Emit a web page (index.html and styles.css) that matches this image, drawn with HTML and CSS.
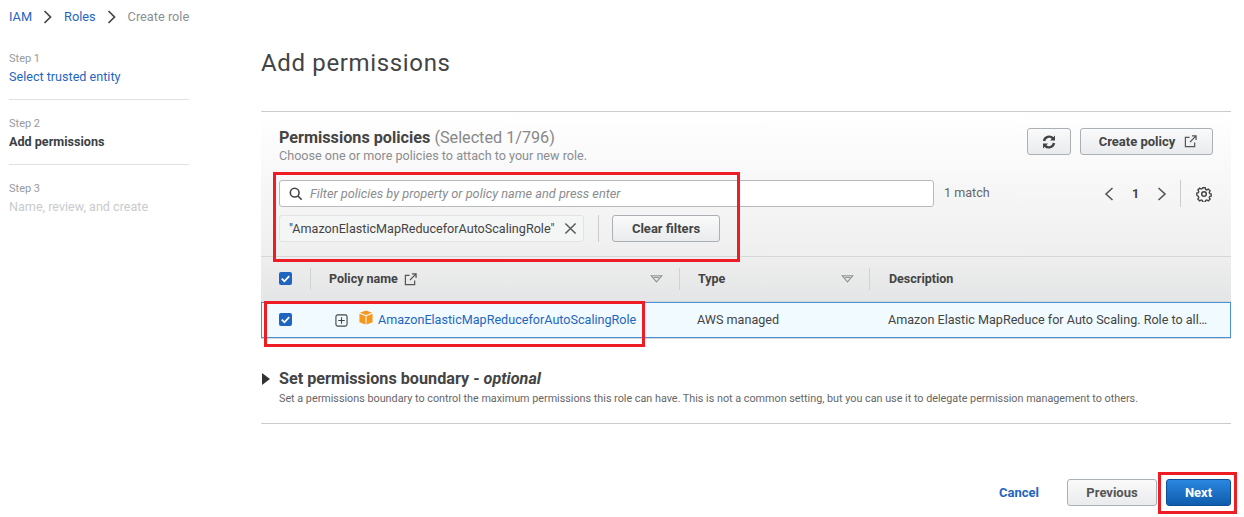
FILE: index.html
```html
<!DOCTYPE html>
<html lang="en">
<head>
<meta charset="utf-8">
<title>Create role</title>
<link rel="stylesheet" href="styles.css">
</head>
<body>
<nav class="crumbs">
  <a class="link">IAM</a>
  <svg class="crumb-sep" viewBox="0 0 12 14"><path d="M2.500 1 8.500 7l-6 6" /></svg>
  <a class="link">Roles</a>
  <svg class="crumb-sep" viewBox="0 0 12 14"><path d="M2.500 1 8.500 7l-6 6" /></svg>
  <span class="crumb-now">Create role</span>
</nav>
<div class="layout">
  <aside class="steps">
    <div class="step step-first"><div class="step-no">Step 1</div><a class="link step-name">Select trusted entity</a></div>
    <div class="step"><div class="step-no">Step 2</div><strong class="step-name step-cur">Add permissions</strong></div>
    <div class="step step-last"><div class="step-no">Step 3</div><span class="step-name step-off">Name, review, and create</span></div>
  </aside>
  <main class="main">
    <h1 class="title">Add permissions</h1>
    <section class="panel">
      <div class="panel-head">
        <div class="head-top">
          <div class="head-text">
            <h2 class="panel-title">Permissions policies <span class="count">(Selected 1/796)</span></h2>
            <p class="panel-sub">Choose one or more policies to attach to your new role.</p>
          </div>
          <div class="head-actions">
            <button class="btn btn-icon"><svg class="ico" viewBox="0 0 16 16"><path class="fat" d="M3 7a5.200 5.200 0 0 1 9-2.600M13 9a5.200 5.200 0 0 1-9 2.600"/><path class="solid" d="M14 1.500V6.500H9zM2 14.500V9.500H7z"/></svg></button>
            <button class="btn btn-create">Create policy<svg class="ext" viewBox="0 0 14 14"><path d="M11.500 8v4.500h-10v-10H6M8.500 1h4.500v4.500M13 1 6.500 7.500"/></svg></button>
          </div>
        </div>
        <div class="filter-row">
          <div class="search">
            <svg class="search-ico" viewBox="0 0 16 16"><circle cx="6.500" cy="6.500" r="5"/><path d="m10.200 10.200 4.300 4.300"/></svg>
            <span class="search-ph">Filter policies by property or policy name and press enter</span>
          </div>
          <span class="matches">1 match</span>
          <div class="pager">
            <svg class="pg" viewBox="0 0 12 16"><path d="M9.500 2 3 8l6.500 6"/></svg>
            <span class="pg-no">1</span>
            <svg class="pg" viewBox="0 0 12 16"><path d="M2.500 2 9 8l-6.500 6"/></svg>
            <span class="pg-div"></span>
            <svg class="gear" viewBox="0 0 16 16"><path d="M6.600 1h2.800l.4 1.900 1.300.6 1.700-1 2 2-1 1.700.6 1.300 1.600.4v2.400l-1.700.5-.5 1.200 1 1.700-2 1.900-1.700-1-1.300.6-.4 1.800H6.600l-.4-1.800-1.300-.6-1.700 1-2-1.900 1-1.700-.5-1.200L0 9.300V6.900l1.700-.4.5-1.300-1-1.700 2-2 1.700 1 1.300-.6z" transform="translate(.8 .8) scale(.9)"/><circle cx="8" cy="8" r="2.300"/></svg>
          </div>
        </div>
        <div class="chips">
          <span class="chip">"AmazonElasticMapReduceforAutoScalingRole"<svg class="chip-x" viewBox="0 0 14 14"><path d="m1.500 1.500 11 11m0-11-11 11"/></svg></span>
          <span class="chip-div"></span>
          <button class="btn btn-clear">Clear filters</button>
        </div>
      </div>
      <div class="thead">
        <div class="th th-check"><span class="check"><svg viewBox="0 0 14 14"><path d="m3 7.200 2.800 2.800L11 4.500"/></svg></span></div>
        <div class="th th-name"><span>Policy name</span><svg class="ext ext-th" viewBox="0 0 14 14"><path d="M11.500 8v4.500h-10v-10H6M8.500 1h4.500v4.500M13 1 6.500 7.500"/></svg><svg class="sort sort-name" viewBox="0 0 16 10"><path d="M1.500 1h13L8 8.500z"/><path d="M4.500 3h7"/></svg></div>
        <div class="th th-type"><span>Type</span><svg class="sort sort-type" viewBox="0 0 16 10"><path d="M1.500 1h13L8 8.500z"/><path d="M4.500 3h7"/></svg></div>
        <div class="th th-desc"><span>Description</span></div>
      </div>
      <div class="row">
        <div class="td td-check"><span class="check"><svg viewBox="0 0 14 14"><path d="m3 7.200 2.800 2.800L11 4.500"/></svg></span></div>
        <div class="td td-name">
          <svg class="plus" viewBox="0 0 14 14"><rect x="1" y="1" width="12" height="12" rx="2"/><path d="M7 3.500v7M3.500 7h7"/></svg>
          <svg class="box" viewBox="0 0 16 16"><path class="box-top" d="M8 0l7 2.600L8 5.200 1 2.600z"/><path class="box-side" d="M.5 3.700 7.400 6.300V16L.5 13.300zM15.500 3.700 8.600 6.300V16l6.900-2.700z"/></svg>
          <a class="link">AmazonElasticMapReduceforAutoScalingRole</a>
        </div>
        <div class="td td-type">AWS managed</div>
        <div class="td td-desc">Amazon Elastic MapReduce for Auto Scaling. Role to all…</div>
      </div>
    </section>
    <section class="boundary">
      <h2 class="boundary-title"><svg class="caret" viewBox="0 0 8 12"><path d="M0 0l8 6-8 6z"/></svg>Set permissions boundary - <em>optional</em></h2>
      <p class="boundary-sub">Set a permissions boundary to control the maximum permissions this role can have. This is not a common setting, but you can use it to delegate permission management to others.</p>
    </section>
    <div class="footer">
      <a class="cancel">Cancel</a>
      <button class="btn btn-prev">Previous</button>
      <button class="btn btn-next">Next</button>
    </div>
  </main>
</div>
<div class="mark mark-filter"></div>
<div class="mark mark-row"></div>
<div class="mark mark-next"></div>
</body>
</html>
```
FILE: styles.css
```css
* { box-sizing: border-box; }
html, body { margin: 0; padding: 0; }
body {
  width: 1244px; height: 517px; overflow: hidden; position: relative;
  background: #fff; color: #444; font: 12.600px/18px Roboto, sans-serif;
}
.link { color: #1f66c1; }
svg { display: block; flex: none; fill: none; }
.crumbs { display: flex; align-items: center; height: 34px; padding-left: 9px; font-size: 12.750px; }
.crumb-sep { width: 12px; height: 14px; margin: 0 10px; stroke: #444; stroke-width: 1.700; }
.crumb-now { color: #8a8f94; }
.layout { display: flex; }
.steps { width: 261px; padding: 14px 0 0 9px; }
.step { width: 180px; height: 65px; border-bottom: 1px solid #e0e0e0; padding-top: 15px; }
.step-first { height: 52px; padding-top: 2px; }
.step-last { border: 0; }
.step-no { color: #979a9d; font-size: 11px; line-height: 18px; }
.step-name { display: block; line-height: 18px; }
.step-cur { color: #3a3f44; font-weight: 700; }
.step-off { color: #c9cbcd; }
.main { width: 970px; }
.title { margin: 0; height: 77px; padding-top: 12px; font-size: 24px; line-height: 34px; font-weight: 400; letter-spacing: .65px; color: #444; }
.panel { border-top: 1px solid #c9cccf; }
.panel-head { height: 145px; padding: 16px 18px 0; background: linear-gradient(#fff, #efefef); border-bottom: 1px solid #d5d8d9; }
.head-top { display: flex; justify-content: space-between; height: 52px; }
.panel-title { margin: 0; font-size: 16.200px; line-height: 20px; font-weight: 700; color: #444; }
.count { font-weight: 400; color: #888; }
.panel-sub { margin: 0; font-size: 12.600px; line-height: 16px; color: #8a8d90; }
.head-actions { display: flex; gap: 9px; align-items: flex-start; }
.btn { font: 700 13px/18px Roboto, sans-serif; color: #444; border: 1px solid #aab0b5; border-radius: 3px; background: linear-gradient(#fafafa, #e9ebed); padding: 0; display: flex; align-items: center; justify-content: center; }
.btn-icon { width: 44px; height: 27px; }
.ico { width: 16px; height: 16px; }
.fat { stroke: #444; stroke-width: 2.400; }
.solid { fill: #444; }
.btn-create { width: 133px; height: 27px; gap: 9px; padding-left: 3px; }
.ext { width: 13px; height: 13px; stroke: #555; stroke-width: 1.300; }
.filter-row { display: flex; align-items: center; height: 27px; }
.search { width: 655px; height: 27px; border: 1px solid #b6babd; border-radius: 3px; background: #fff; display: flex; align-items: center; gap: 7px; padding-left: 9px; }
.search-ico { width: 14px; height: 14px; stroke: #444; stroke-width: 1.800; }
.search-ph { font-style: italic; color: #8a8d90; font-size: 12.750px; }
.matches { margin: -1px 0 0 10px; color: #666; }
.pager { margin-left: auto; display: flex; align-items: center; height: 27px; }
.pg { width: 12px; height: 16px; stroke: #555; stroke-width: 1.600; }
.pg-no { width: 41px; text-align: center; font-weight: 700; }
.pg-div { width: 1px; height: 27px; background: #ccc; margin: 0 15px 0 12px; }
.gear { width: 16px; height: 16px; stroke: #444; stroke-width: 1.500; margin-right: 1px; }
.chips { display: flex; align-items: center; height: 27px; margin-top: 8px; }
.chip { display: flex; align-items: center; justify-content: space-between; width: 305px; height: 27px; padding: 0 6px 0 9px; background: #f4f5f5; border: 1px solid #e1e3e4; border-radius: 3px; color: #444; }
.chip-x { width: 13px; height: 13px; stroke: #555; stroke-width: 1.500; }
.chip-div { width: 1px; height: 27px; background: #ccc; margin: 0 13px 0 14px; }
.btn-clear { width: 108px; height: 27px; }
.thead { display: flex; height: 45px; align-items: center; background: linear-gradient(#eeeeee, #e4e5e6); border-bottom: 1px solid #d5d8d9; font-weight: 700; color: #444; font-size: 12.500px; }
.th { display: flex; align-items: center; height: 22px; border-right: 1px solid #d0d2d3; }
.th-check { width: 50px; padding: 0 0 2px 18px; }
.th-name { width: 369px; padding-left: 18px; }
.ext-th { margin-left: 6px; }
.sort { width: 13px; height: 8px; margin-left: auto; stroke: #8e9192; stroke-width: 1.400; }
.sort-name { margin-right: 16px; }
.sort-type { margin-right: 15px; }
.th-type { width: 190px; padding-left: 18px; }
.th-desc { border: 0; padding-left: 19px; }
.check { display: block; width: 13px; height: 13px; border-radius: 2px; background: #1f66c1; }
.check svg { width: 13px; height: 13px; stroke: #fff; stroke-width: 2; }
.row { display: flex; align-items: center; height: 36px; background: #f1faff; border: 1px solid #4a90d9; box-shadow: 0 1px 0 #d5d8d9; }
.td { display: flex; align-items: center; }
.td-check { width: 49px; padding: 0 0 2px 17px; }
.td-name { width: 368px; padding-left: 24px; }
.plus { width: 13px; height: 13px; stroke: #444; stroke-width: 1.200; }
.box { width: 14px; height: 15px; margin: -6px 5px 0 11px; }
.box-top, .box-side { fill: #f7981d; }
.td-type { width: 191px; padding-left: 18px; }
.td-desc { width: 338px; display: block; white-space: nowrap; padding-left: 18px; }
.boundary { height: 86px; padding-top: 31px; border-bottom: 1px solid #c9cccf; }
.boundary-title { margin: 0; display: flex; align-items: center; white-space: pre; font-size: 16.200px; line-height: 20px; font-weight: 700; color: #444; }
.boundary-title em { font-style: italic; }
.caret { width: 8px; height: 12px; margin: 0 9px 0 1px; fill: #333; }
.boundary-sub { margin: 2px 0 0 18px; font-size: 10.790px; line-height: 16px; color: #666; white-space: nowrap; }
.footer { display: flex; align-items: center; justify-content: flex-end; margin-top: 55px; }
.cancel { color: #1f66c1; font-weight: 700; font-size: 13px; margin-right: 28px; }
.btn-prev { width: 90px; height: 27px; color: #555; margin-right: 9px; }
.btn-next { width: 65px; height: 27px; color: #fff; background: linear-gradient(#2a87e0, #0f5cad); border-color: #0d4f94; }
.mark { position: absolute; border: 3px solid #ee1c25; }
.mark-filter { left: 273px; top: 172px; width: 467px; height: 90px; }
.mark-row { left: 264px; top: 301px; width: 381px; height: 46px; }
.mark-next { left: 1158px; top: 472px; width: 79px; height: 42px; }
```
